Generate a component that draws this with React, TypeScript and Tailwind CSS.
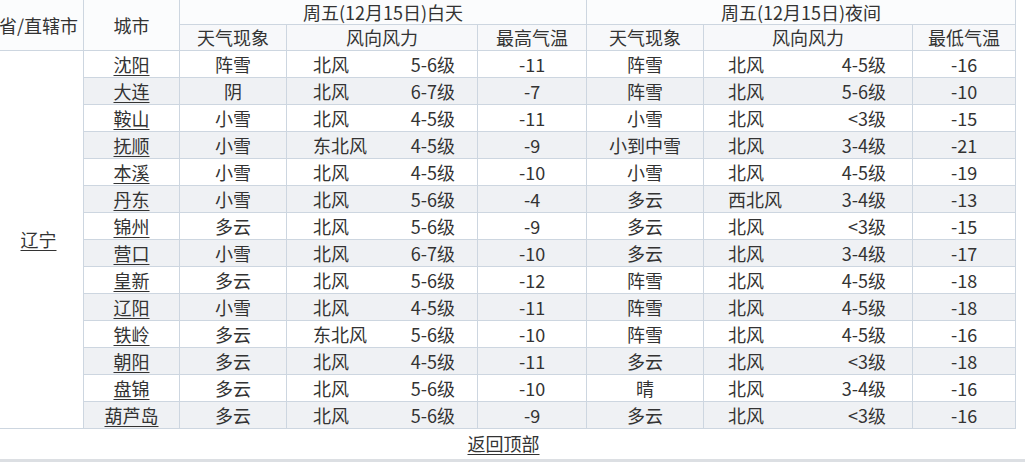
const rows = [
  ["沈阳", "阵雪", "北风", "5-6级", "-11", "阵雪", "北风", "4-5级", "-16"],
  ["大连", "阴", "北风", "6-7级", "-7", "阵雪", "北风", "5-6级", "-10"],
  ["鞍山", "小雪", "北风", "4-5级", "-11", "小雪", "北风", "<3级", "-15"],
  ["抚顺", "小雪", "东北风", "4-5级", "-9", "小到中雪", "北风", "3-4级", "-21"],
  ["本溪", "小雪", "北风", "4-5级", "-10", "小雪", "北风", "4-5级", "-19"],
  ["丹东", "小雪", "北风", "5-6级", "-4", "多云", "西北风", "3-4级", "-13"],
  ["锦州", "多云", "北风", "5-6级", "-9", "多云", "北风", "<3级", "-15"],
  ["营口", "小雪", "北风", "6-7级", "-10", "多云", "北风", "3-4级", "-17"],
  ["皇新", "多云", "北风", "5-6级", "-12", "阵雪", "北风", "4-5级", "-18"],
  ["辽阳", "小雪", "北风", "4-5级", "-11", "阵雪", "北风", "4-5级", "-18"],
  ["铁岭", "多云", "东北风", "5-6级", "-10", "阵雪", "北风", "4-5级", "-16"],
  ["朝阳", "多云", "北风", "4-5级", "-11", "多云", "北风", "<3级", "-18"],
  ["盘锦", "多云", "北风", "5-6级", "-10", "晴", "北风", "3-4级", "-16"],
  ["葫芦岛", "多云", "北风", "5-6级", "-9", "多云", "北风", "<3级", "-16"],
];

const cell = "border border-[#cdd6e0] text-center font-normal";

export default function App() {
  return (
    <div
      className="w-[1025px] h-[462px] overflow-hidden bg-white text-[#333] text-[18px]"
      style={{ fontFamily: '"Noto Sans CJK SC", "Noto Sans", sans-serif' }}
    >
      <table className="table-fixed border-collapse w-[1022px] -ml-[7px] leading-none">
        <colgroup>
          <col className="w-[90px]" />
          <col className="w-[96px]" />
          <col className="w-[107px]" />
          <col className="w-[191px]" />
          <col className="w-[109px]" />
          <col className="w-[117px]" />
          <col className="w-[209px]" />
          <col className="w-[103px]" />
        </colgroup>
        <thead>
          <tr className="h-[24px]">
            <th rowSpan={2} className={`${cell} border-t-0 bg-[#fbfcfd]`}>省/直辖市</th>
            <th rowSpan={2} className={`${cell} border-t-0 bg-[#fbfcfd]`}>城市</th>
            <th colSpan={3} className={`${cell} border-t-0 bg-[#fbfcfd]`}>周五(12月15日)白天</th>
            <th colSpan={3} className={`${cell} border-t-0 bg-[#fbfcfd]`}>周五(12月15日)夜间</th>
          </tr>
          <tr className="h-[26px] bg-[#f7f8fa]">
            <th className={cell}>天气现象</th>
            <th className={cell}>风向风力</th>
            <th className={cell}>最高气温</th>
            <th className={cell}>天气现象</th>
            <th className={cell}>风向风力</th>
            <th className={cell}>最低气温</th>
          </tr>
        </thead>
        <tbody>
          {rows.map((r, i) => (
            <tr key={r[0]} className={`h-[27px] ${i % 2 === 1 ? "bg-[#eff1f4]" : "bg-white"}`}>
              {i === 0 && (
                <td rowSpan={rows.length} className={`${cell} bg-white`}>
                  <span className="underline underline-offset-[3px]">辽宁</span>
                </td>
              )}
              <td className={cell}>
                <span className="underline underline-offset-[3px]">{r[0]}</span>
              </td>
              <td className={cell}>{r[1]}</td>
              <td className="border border-[#cdd6e0]">
                <div className="flex justify-between pl-[26px] pr-[22px]">
                  <span>{r[2]}</span>
                  <span>{r[3]}</span>
                </div>
              </td>
              <td className={cell}>{r[4]}</td>
              <td className={cell}>{r[5]}</td>
              <td className="border border-[#cdd6e0]">
                <div className="flex justify-between pl-[24px] pr-[26px]">
                  <span>{r[6]}</span>
                  <span>{r[7]}</span>
                </div>
              </td>
              <td className={cell}>{r[8]}</td>
            </tr>
          ))}
        </tbody>
      </table>
      <div className="w-[1025px] h-[34px] flex items-center justify-center pr-[18px] border-b-[4px] border-[#dcdfe3]">
        <span className="underline underline-offset-[3px]">返回顶部</span>
      </div>
    </div>
  );
}
